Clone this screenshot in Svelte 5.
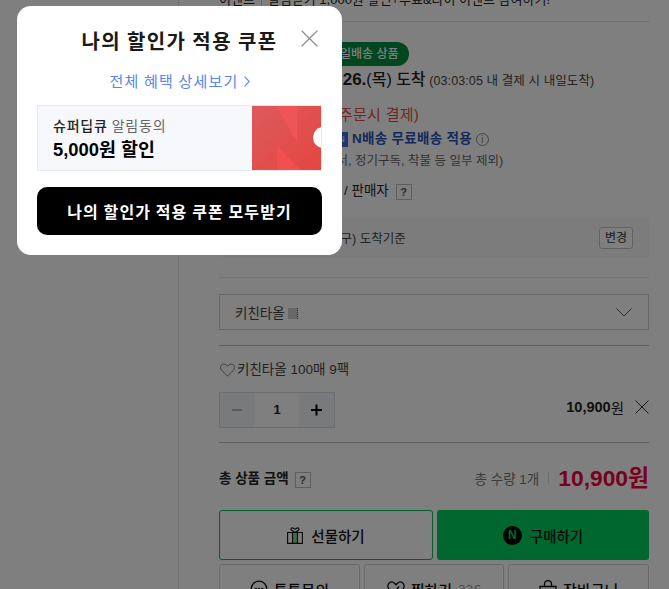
<script>
  const coupon = { brand: '슈퍼딥큐', suffix: '알림동의', amount: '5,000원 할인' };
</script>

<div class="page">
  <div class="side"></div>
  <main class="product">
    <div class="event">
      <span>이벤트</span><i></i><span>알림받기 1,000원 할인+무료&amp;다이 이벤트 참여하기!</span>
    </div>

    <section class="delivery">
      <span class="badge">내일배송 상품</span>
      <p class="arrive"><b><strong>11.26.</strong>(목) 도착</b> <small>(03:03:05 내 결제 시 내일도착)</small></p>
      <p class="fee">택배배송 3,000원 <em>(주문시 결제)</em></p>
      <p class="nship"><span class="nmark">N</span><b>N배송 무료배송 적용</b><span class="info">i</span></p>
      <p class="except">(제주, 도서, 정기구독, 착불 등 일부 제외)</p>
      <p class="seller">배송지 / 판매자 <span class="help">?</span></p>
      <div class="address">
        <span>서울 강남구 (강남구) 도착기준</span>
        <span class="change">변경</span>
      </div>
    </section>

    <div class="select">
      <span>키친타올 <i class="thumb"></i></span>
      <svg width="16" height="9" viewBox="0 0 16 9"><path d="M.5.5 8 8 15.500.5" fill="none" stroke="#5c5c5c"/></svg>
    </div>

    <section class="option">
      <p class="option-name">
        <svg width="15" height="14" viewBox="0 0 15 14"><path d="M7.500 13.200 1.600 7.200C.2 5.700.2 3.500 1.500 2.100 2.900.7 5 .8 6.400 2.100l1.100 1.100 1.100-1.100C10 .8 12.100.7 13.500 2.100c1.300 1.400 1.300 3.600-.1 5.100z" fill="none" stroke="#5a5a5a" stroke-width=".8"/></svg>
        키친타올 100매 9팩
      </p>
      <div class="qty-row">
        <div class="qty">
          <span class="step minus"></span>
          <span class="count">1</span>
          <span class="step plus"></span>
        </div>
        <div class="line-price">
          <b>10,900</b>원
          <svg width="14" height="14" viewBox="0 0 14 14"><path d="M.5.5l13 13M13.500.5l-13 13" stroke="#1a1a1a" stroke-width=".9"/></svg>
        </div>
      </div>
    </section>

    <section class="total">
      <div class="total-label"><b>총 상품 금액</b><span class="help">?</span></div>
      <div class="total-right">
        <span class="count-text">총 수량 1개</span><i></i><strong>10,900원</strong>
      </div>
    </section>

    <div class="buy-row">
      <button class="gift">
        <svg width="16" height="17" viewBox="0 0 16 17" fill="none" stroke="#111" stroke-width="1.100">
          <rect x="5.500" y="5.500" width="5" height="11" fill="#7fd79c" stroke="none"/>
          <path d="M.6 5.500h14.800V16.400H.6zM5.500 5.500v10.900M10.500 5.500v10.900M8 5.500 4.600 3.200C3.300 2.200 4.400.5 6 1l2 1.200L10 1c1.600-.5 2.700 1.200 1.400 2.200z"/>
        </svg>
        선물하기
      </button>
      <button class="buy"><span class="n-circle">N</span>구매하기</button>
    </div>
    <div class="sub-row">
      <button>
        <svg width="18" height="18" viewBox="0 0 18 18" fill="none" stroke="#111" stroke-width="1.300"><circle cx="9" cy="9" r="7.800"/><circle cx="5.800" cy="9" r=".6" fill="#111"/><circle cx="9" cy="9" r=".6" fill="#111"/><circle cx="12.200" cy="9" r=".6" fill="#111"/></svg>
        톡톡문의
      </button>
      <button>
        <svg width="18" height="16" viewBox="0 0 18 16" fill="none" stroke="#111" stroke-width="1.300"><path d="M9 15 2 8C.4 6.300.4 3.700 2 2.200 3.600.7 6 .8 7.500 2.300L9 3.800l1.500-1.500C12 .8 14.400.7 16 2.200c1.600 1.500 1.600 4.100 0 5.800z"/><path d="M6.500 8 8.500 10 12 5.500"/></svg>
        찜하기 <span class="zzim">326</span>
      </button>
      <button>
        <svg width="18" height="18" viewBox="0 0 18 18" fill="none" stroke="#111" stroke-width="1.300"><path d="M1 6.500h16V17H1zM5.500 6.500V4a3.500 3.500 0 0 1 7 0v2.500M1 11h16"/></svg>
        장바구니
      </button>
    </div>
  </main>

  <div class="dim"></div>

  <div class="modal">
    <svg class="close" width="17" height="17" viewBox="0 0 17 17"><path d="M.7.7l15.600 15.600M16.300.7 .7 16.300" stroke="#8f8f8f" stroke-width="1.300"/></svg>
    <h2>나의 할인가 적용 쿠폰</h2>
    <p class="detail">
      전체 혜택 상세보기
      <svg width="6" height="11" viewBox="0 0 6 11"><path d="M.6.6 5.300 5.500.6 10.400" fill="none" stroke="#5a85ee" stroke-width="1.100"/></svg>
    </p>
    <div class="coupon">
      <div class="coupon-text">
        <p class="coupon-name"><b>{coupon.brand}</b> {coupon.suffix}</p>
        <p class="coupon-amount">{coupon.amount}</p>
      </div>
      <div class="ticket">
        <svg width="69" height="64" viewBox="0 0 69 64">
          <defs>
            <linearGradient id="tk" x1="0" y1="0" x2="1" y2="1">
              <stop offset="0" stop-color="#dd5a5e"/>
              <stop offset="1" stop-color="#e4463f"/>
            </linearGradient>
          </defs>
          <rect width="69" height="64" fill="url(#tk)"/>
          <path d="M24 0h21v36z" fill="#ee5556"/>
          <path d="M25 40l24 24H25z" fill="#f0504f"/>
        </svg>
        <span class="notch"></span>
      </div>
    </div>
    <button class="get-all">나의 할인가 적용 쿠폰 모두받기</button>
  </div>
</div>

<style>
  :global(body) {
    margin: 0;
    background: #fff;
  }
  .page {
    position: relative;
    display: flex;
    width: 669px;
    height: 589px;
    overflow: hidden;
    font-family: "Liberation Sans", "Noto Sans CJK KR", sans-serif;
    color: #222;
  }
  p, h2 {
    margin: 0;
  }
  .side {
    width: 178px;
    flex: none;
    border-right: 1px solid #e2e2e2;
  }
  .product {
    width: 430px;
    margin-left: 40px;
    flex: none;
  }
  .event {
    height: 30px;
    margin-top: -9px;
    border-bottom: 1px solid #dedede;
    display: flex;
    gap: 6px;
    font-size: 13px;
    line-height: 18px;
    white-space: nowrap;
    overflow: hidden;
  }
  .event i {
    width: 1px;
    height: 14px;
    background: #ccc;
  }
  .delivery {
    height: 256px;
    border-bottom: 1px solid #e4e4e4;
    font-size: 13px;
    box-sizing: border-box;
    padding-top: 20px;
  }
  .badge {
    display: block;
    width: max-content;
    margin-left: 100px;
    height: 24px;
    padding: 0 10px;
    border-radius: 12px;
    background: #008c3c;
    color: #fff;
    font-size: 12px;
    font-weight: 500;
    line-height: 24px;
  }
  .arrive {
    margin-top: 2px;
    margin-left: 101px;
    line-height: 24px;
    white-space: nowrap;
  }
  .arrive b {
    font-size: 16px;
    font-weight: 500;
  }
  .arrive strong {
    font-size: 17px;
  }
  .arrive small {
    font-size: 12.500px;
    color: #444;
    letter-spacing: .1px;
  }
  .fee {
    margin-top: 12px;
    margin-left: 15px;
    line-height: 20px;
  }
  .fee em {
    font-style: normal;
    color: #e14b4b;
    font-size: 15px;
    letter-spacing: .3px;
  }
  .nship {
    margin-top: 2px;
    margin-left: 116px;
    display: flex;
    align-items: center;
    gap: 4px;
    line-height: 22px;
  }
  .nship b {
    color: #2b54b8;
    font-size: 13.500px;
    letter-spacing: .3px;
  }
  .nmark {
    width: 13px;
    height: 15px;
    background: #3a6be0;
    color: #fff;
    font-size: 9px;
    text-align: center;
    line-height: 15px;
  }
  .info {
    width: 11px;
    height: 11px;
    border: 1px solid #888;
    border-radius: 50%;
    color: #888;
    font-size: 10px;
    line-height: 11px;
    text-align: center;
  }
  .except {
    margin-left: 72px;
    color: #666;
    font-size: 12.500px;
    line-height: 22px;
    white-space: nowrap;
  }
  .seller {
    margin-top: 8px;
    padding-left: 84px;
    font-size: 13.500px;
    line-height: 22px;
  }
  .help {
    display: inline-block;
    width: 14px;
    height: 14px;
    border: 1px solid #bcbcbc;
    color: #555;
    font-size: 11px;
    font-weight: 700;
    line-height: 14px;
    text-align: center;
    vertical-align: -1px;
    margin-left: 3px;
  }
  .address {
    margin-top: 16px;
    height: 39px;
    padding: 0 16px 0 30px;
    background: #f9f9f9;
    display: flex;
    justify-content: space-between;
    align-items: center;
    font-size: 12.500px;
    color: #444;
  }
  .change {
    width: 32px;
    height: 20px;
    border: 1px solid #c4c4c4;
    border-radius: 3px;
    background: #fff;
    text-align: center;
    line-height: 20px;
    font-size: 12px;
    color: #333;
  }
  .select {
    margin-top: 16px;
    height: 36px;
    box-sizing: border-box;
    border: 1px solid #ccc;
    padding: 0 16px 0 15px;
    display: flex;
    justify-content: space-between;
    align-items: center;
    font-size: 13.500px;
    color: #444;
  }
  .thumb {
    display: inline-block;
    width: 9px;
    height: 11px;
    background: #d0d0d0;
    border-right: 1px dotted #c03030;
    vertical-align: -1px;
  }
  .option {
    margin-top: 15px;
    height: 98px;
    box-sizing: border-box;
    border-top: 1px solid #bbb;
    border-bottom: 1px solid #bbb;
  }
  .option-name {
    display: flex;
    align-items: center;
    gap: 2px;
    padding: 14px 0 0 1px;
    font-size: 13.500px;
    line-height: 20px;
    color: #444;
  }
  .qty-row {
    margin-top: 12px;
    display: flex;
    justify-content: space-between;
    align-items: center;
  }
  .qty {
    display: flex;
    border: 1px solid #d8dde2;
    height: 34px;
  }
  .step {
    position: relative;
    width: 35px;
    background: #f3f5f7;
  }
  .minus::before,
  .plus::before,
  .plus::after {
    content: "";
    position: absolute;
    left: 12px;
    top: 16px;
    width: 10px;
    height: 2px;
    background: #aeb4ba;
  }
  .plus::before,
  .plus::after {
    background: #000;
    left: 12px;
    width: 11px;
  }
  .plus::after {
    transform: rotate(90deg);
  }
  .count {
    width: 44px;
    background: #fff;
    text-align: center;
    font-size: 13px;
    font-weight: 700;
    line-height: 34px;
  }
  .line-price {
    display: flex;
    align-items: center;
    font-size: 14.500px;
    color: #222;
    margin-top: -6px;
  }
  .line-price svg {
    margin-left: 11px;
  }
  .total {
    height: 69px;
    display: flex;
    justify-content: space-between;
    align-items: center;
  }
  .total-label {
    font-size: 13.500px;
  }
  .total-label .help {
    margin-left: 6px;
  }
  .total-right {
    display: flex;
    align-items: center;
  }
  .count-text {
    font-size: 13.500px;
    color: #777;
  }
  .total-right i {
    width: 1px;
    height: 12px;
    background: #ddd;
    margin: 0 9px;
  }
  .total-right strong {
    font-size: 22.800px;
    color: #f5003f;
    line-height: 30px;
  }
  .buy-row {
    display: flex;
    gap: 4px;
    margin-top: -2px;
  }
  .buy-row button {
    flex: 1;
    height: 50px;
    border-radius: 3px;
    font: 500 14.500px "Noto Sans CJK KR", sans-serif;
    color: #111;
    display: flex;
    align-items: center;
    justify-content: center;
    gap: 8px;
    padding: 0;
  }
  .gift {
    border: 1px solid #00c05a;
    background: #fff;
  }
  .buy {
    border: none;
    background: #00cf5e;
  }
  .n-circle {
    width: 19px;
    height: 19px;
    border-radius: 50%;
    background: #000;
    color: #00cf5e;
    font: 700 12px/19px "Liberation Sans", sans-serif;
    text-align: center;
  }
  .sub-row {
    display: flex;
    gap: 4px;
    margin-top: 4px;
  }
  .sub-row button {
    flex: 1;
    height: 50px;
    border: 1px solid #d5d5d5;
    border-radius: 3px;
    background: #fff;
    font: 500 15px "Noto Sans CJK KR", sans-serif;
    color: #111;
    display: flex;
    align-items: center;
    justify-content: center;
    gap: 6px;
    padding: 0;
  }
  .zzim {
    color: #999;
    font-weight: 400;
    font-size: 14px;
  }
  .dim {
    position: absolute;
    inset: 0;
    background: rgba(0, 0, 0, 0.5);
  }
  .modal {
    position: absolute;
    left: 17px;
    top: 6px;
    width: 325px;
    height: 249px;
    box-sizing: border-box;
    padding: 0 20px;
    background: #fff;
    border-radius: 14px;
  }
  .close {
    position: absolute;
    right: 24px;
    top: 24px;
  }
  h2 {
    margin-top: 20px;
    text-align: center;
    font: 700 20px/30px "Noto Sans CJK KR", sans-serif;
    color: #1a1a1a;
    letter-spacing: 1.400px;
  }
  .detail {
    margin-top: 15px;
    display: flex;
    justify-content: center;
    align-items: center;
    gap: 5px;
    color: #5a85ee;
    font: 400 15px/20px "Noto Sans CJK KR", sans-serif;
    letter-spacing: 1.200px;
  }
  .coupon {
    position: relative;
    overflow: hidden;
    margin-top: 14px;
    height: 66px;
    box-sizing: border-box;
    border: 1px solid #e9eaf2;
    background: #f7f8fc;
    display: flex;
    justify-content: space-between;
  }
  .coupon-text {
    padding: 9px 0 0 15px;
  }
  .coupon-name {
    font: 400 14px/20px "Noto Sans CJK KR", sans-serif;
    color: #666;
    letter-spacing: .8px;
  }
  .coupon-name b {
    font-weight: 500;
    color: #222;
  }
  .coupon-amount {
    margin-top: 2px;
    font: 700 18.400px/26px "Liberation Sans", "Noto Sans CJK KR", sans-serif;
    color: #000;
  }
  .ticket {
    position: relative;
    width: 69px;
    height: 64px;
  }
  .ticket svg {
    display: block;
  }
  .notch {
    position: absolute;
    left: 61px;
    top: 21px;
    width: 21px;
    height: 21px;
    border-radius: 50%;
    background: #fff;
  }
  .get-all {
    display: block;
    width: 285px;
    height: 48px;
    margin-top: 16px;
    border: none;
    border-radius: 10px;
    background: #000;
    color: #fff;
    font: 700 16px "Noto Sans CJK KR", sans-serif;
    letter-spacing: 1.100px;
    padding: 0;
  }
</style>
